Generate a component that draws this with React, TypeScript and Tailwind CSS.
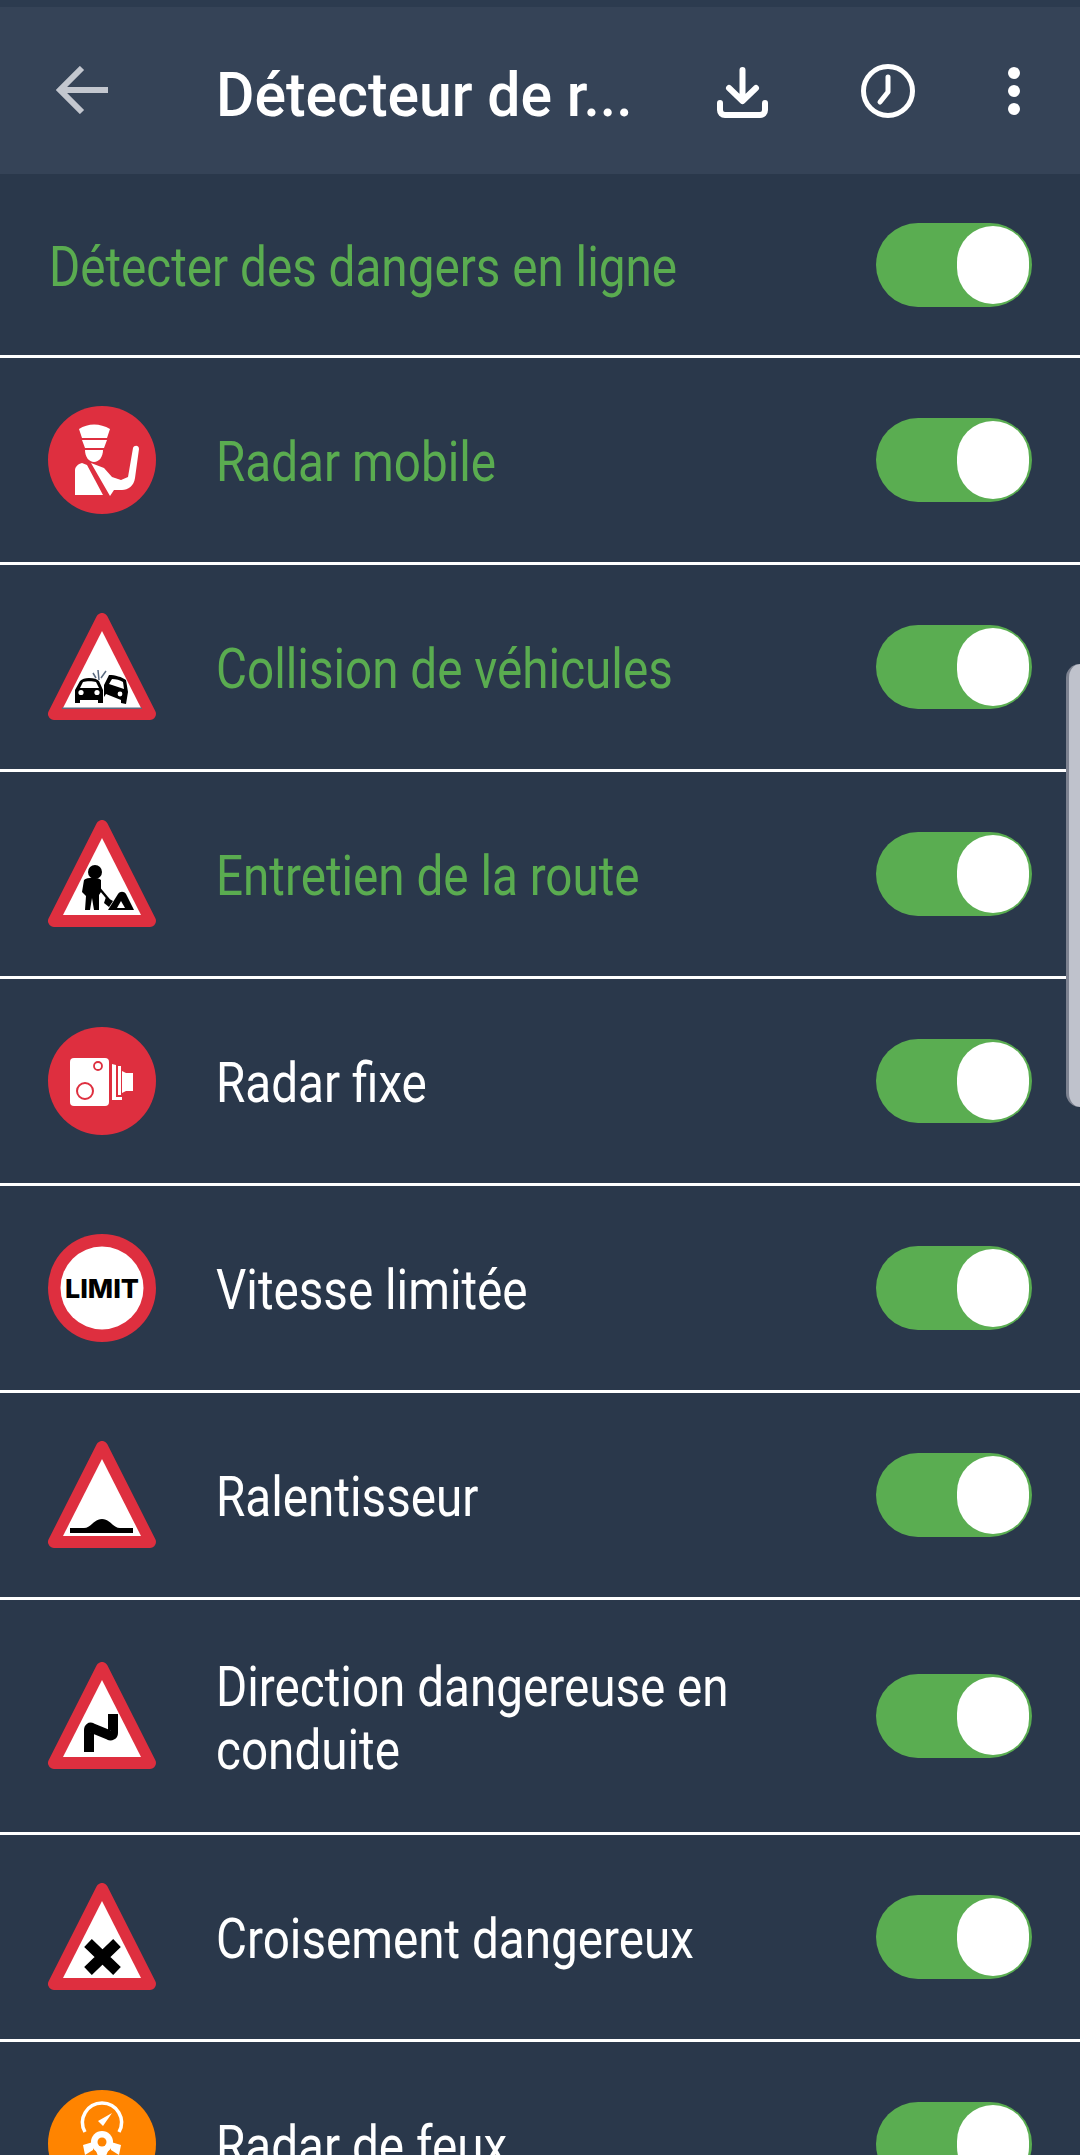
const labelFont = "font-['Roboto',sans-serif]";

function Triangle({ children }: { children?: React.ReactNode }) {
  return (
    <svg viewBox="0 0 108 108" className="w-[108px] h-[108px] shrink-0">
      <polygon points="54,6 6,101 102,101" fill="#de2f3f" stroke="#de2f3f" strokeWidth="12" strokeLinejoin="round" />
      <polygon points="54,18 15,95 93,95" fill="#ffffff" />
      {children}
    </svg>
  );
}

function Badge({ children, color = "#de2f3f" }: { children?: React.ReactNode; color?: string }) {
  return (
    <svg viewBox="0 0 108 108" className="w-[108px] h-[108px] shrink-0">
      <circle cx="54" cy="54" r="54" fill={color} />
      {children}
    </svg>
  );
}

const PoliceIcon = () => (
  <Badge>
    <path d="M31 23 C40 17 52 17 62 23 L59 32 H34 Z" fill="#fff" />
    <path d="M34 34 H59 L56 42 H37 Z" fill="#fff" />
    <path d="M37 44 H55 C55 51 51 56 46 56 C41 56 37 51 37 44 Z" fill="#fff" />
    <path d="M27 89 V64 C27 61 30 58 34 57 L39 59 L55 89 Z" fill="#fff" />
    <path d="M43 57 L56 62 L64 71 L73 74 L80 71 L85 42 C86 39 91 39 91 43 L87 72 C86 80 80 84 74 84 L66 84 L62 90 Z" fill="#fff" />
  </Badge>
);

const CollisionIcon = () => (
  <Triangle>
    <path d="M27 90 V77 L32 68 C34 66 37 65 41 65 C46 65 49 66 51 68 L55 77 V90 H50 V87 H32 V90 Z" fill="#000" />
    <path d="M32 75 L35 69 C38 68 45 68 48 69 L51 75 Z" fill="#fff" />
    <circle cx="33" cy="79.5" r="2.6" fill="#fff" />
    <circle cx="49" cy="79.5" r="2.6" fill="#fff" />
    <path d="M56 72 L61 62 C67 62 74 64 78 67 L80 79 L78 91 L73 90 L73 87 L58 81 L56 84 Z" fill="#000" />
    <path d="M61 71 L64 66 C68 66 72 67 75 69 L76 76 Z" fill="#fff" />
    <circle cx="72" cy="81" r="2.4" fill="#fff" />
    <path d="M51 67 L50 57 M53 65 L58 58 M48 65 L45 60" stroke="#5b6b80" strokeWidth="1.5" />
    <rect x="14" y="94.5" width="80" height="1.5" fill="#5b6b80" />
  </Triangle>
);

const WorkerIcon = () => (
  <Triangle>
    <circle cx="47" cy="52" r="7" fill="#000" />
    <path d="M36 60 C39 57 50 57 53 60 L53 72 L51 75 V90 H46 L44 78 L42 90 H37 L38 76 L34 72 Z" fill="#000" />
    <path d="M51 68 L61 80" stroke="#000" strokeWidth="2.4" />
    <path d="M58 77 L65 81 L61 87 L56 83 Z" fill="#000" />
    <path d="M60 90 L70 74 C72 71 76 71 78 74 L86 90 Z" fill="#000" />
    <path d="M69 88 L73 81 L77 88 Z" fill="#fff" />
  </Triangle>
);

const FixedRadarIcon = () => (
  <Badge>
    <rect x="22" y="31" width="39" height="48" rx="4" fill="#fff" />
    <circle cx="50" cy="39" r="4" fill="none" stroke="#de2f3f" strokeWidth="1.8" />
    <circle cx="37" cy="64" r="8" fill="none" stroke="#de2f3f" strokeWidth="2" />
    <path d="M64 37 L68 38 V71 H64 Z M70 39 H73 V68 H70 Z" fill="#fff" />
    <path d="M64 73 H74 V70 H64 Z" fill="#fff" />
    <path d="M74 44 L78 46 H85 V64 H78 L74 66 Z" fill="#fff" />
  </Badge>
);

const LimitIcon = () => (
  <svg viewBox="0 0 108 108" className="w-[108px] h-[108px] shrink-0">
    <circle cx="54" cy="54" r="54" fill="#de2f3f" />
    <circle cx="54" cy="54" r="41.5" fill="#fff" />
    <text x="54" y="63.5" textAnchor="middle" textLength="74" lengthAdjust="spacingAndGlyphs" fontFamily="Inter, sans-serif" fontWeight="800" fontSize="26" fill="#000">
      LIMIT
    </text>
  </svg>
);

const BumpIcon = () => (
  <Triangle>
    <path d="M22 87 H36 C43 87 46 78 54 78 C62 78 65 87 72 87 H85 V92 H22 Z" fill="#000" />
  </Triangle>
);

const CurveIcon = () => (
  <Triangle>
    <path d="M41 90 V68 C41 66 42 65 44 66 L61 73 C63 74 65 73 65 71 V52" fill="none" stroke="#000" strokeWidth="10" />
  </Triangle>
);

const CrossIcon = () => (
  <Triangle>
    <path d="M40 60 L69 88 M69 60 L40 88" fill="none" stroke="#000" strokeWidth="11" />
  </Triangle>
);

const LightsIcon = () => (
  <Badge color="#ff8400">
    <path d="M37 42 A19.5 19.5 0 1 1 71 42" fill="none" stroke="#fff" strokeWidth="3.5" />
    <path d="M50 31 L64 23 L55 36 Z" fill="#fff" />
    <circle cx="54" cy="52" r="11" fill="#fff" />
    <path d="M35 55 L45 52 V60 L37 65 Z M73 55 L63 52 V60 L71 65 Z M46 56 H62 L58 66 H50 Z" fill="#fff" />
    <circle cx="54" cy="52" r="4.5" fill="#ff8400" />
  </Badge>
);

function Toggle() {
  return (
    <div className="w-[156px] h-[84px] rounded-full bg-[#5aad51] flex items-center justify-end pr-[3px] shrink-0">
      <div className="w-[72px] h-[78px] rounded-full bg-white" />
    </div>
  );
}

type Row = { label: string; active?: boolean; icon: React.ReactNode; tall?: boolean };

const rows: Row[] = [
  { label: "Radar mobile", active: true, icon: <PoliceIcon /> },
  { label: "Collision de véhicules", active: true, icon: <CollisionIcon /> },
  { label: "Entretien de la route", active: true, icon: <WorkerIcon /> },
  { label: "Radar fixe", icon: <FixedRadarIcon /> },
  { label: "Vitesse limitée", icon: <LimitIcon /> },
  { label: "Ralentisseur", icon: <BumpIcon /> },
  { label: "Direction dangereuse en conduite", icon: <CurveIcon />, tall: true },
  { label: "Croisement dangereux", icon: <CrossIcon /> },
  { label: "Radar de feux", icon: <LightsIcon /> },
];

export default function App() {
  return (
    <main className={`relative w-[1080px] h-[2155px] overflow-hidden bg-[#2a384b] ${labelFont}`}>
      {/* Status strip + toolbar */}
      <div className="h-[7px] bg-[#2c3b4f]" />
      <header className="h-[167px] bg-[#354357] flex items-center relative">
        <svg viewBox="0 0 52 48" className="absolute left-[56px] top-[59px] w-[52px] h-[48px]" fill="none" stroke="#c3c7cf" strokeWidth="6">
          <path d="M26 2 L4 24 L26 46 M4 24 H52" />
        </svg>
        <h1 className="absolute left-[216px] top-[54px] w-[440px] text-[62px] leading-[68px] font-medium text-white whitespace-nowrap origin-left scale-x-[0.95]">
          Détecteur de r...
        </h1>
        <svg viewBox="0 0 51 51" className="absolute left-[717px] top-[60px] w-[51px] h-[51px]" fill="none" stroke="#fff" strokeWidth="6" strokeLinecap="round" strokeLinejoin="round">
          <path d="M25.5 3 V33 M12 21 L25.5 34 L39 21" />
          <path d="M3 36 V43 C3 46 5 48 8 48 H43 C46 48 48 46 48 43 V36" />
        </svg>
        <svg viewBox="0 0 54 54" className="absolute left-[861px] top-[57px] w-[54px] h-[54px]" fill="none" stroke="#fff" strokeWidth="5">
          <circle cx="27" cy="27" r="24.5" />
          <path d="M27 13 V28 L19 38" strokeLinecap="round" strokeLinejoin="round" />
        </svg>
        <div className="absolute left-[1008px] top-[60px] w-[12px] h-[48px] flex flex-col justify-between">
          <div className="w-[12px] h-[12px] rounded-full bg-white" />
          <div className="w-[12px] h-[12px] rounded-full bg-white" />
          <div className="w-[12px] h-[12px] rounded-full bg-white" />
        </div>
      </header>

      <div className="h-[181px] flex items-center justify-between pl-[49px] pr-[48px]">
        <span className="pt-[5px] text-[55px] leading-[62px] text-[#5aac50] whitespace-nowrap origin-left scale-x-[0.866]">
          Détecter des dangers en ligne
        </span>
        <Toggle />
      </div>

      {rows.map((row) => (
        <div key={row.label}>
          <div className="h-[3px] bg-white" />
          <div className={`${row.tall ? "h-[232px]" : "h-[204px]"} flex items-center pl-[48px] pr-[48px]`}>
            {row.icon}
            <div className="ml-[60px] flex-1 min-w-0">
              <div className={`pt-[5px] w-[635px] text-[55px] leading-[63px] origin-left scale-x-[0.866] ${row.active ? "text-[#5aac50]" : "text-white"}`}>
                {row.label}
              </div>
            </div>
            <Toggle />
          </div>
        </div>
      ))}

      {/* Scrollbar thumb */}
      <div className="absolute left-[1066px] top-[664px] w-[14px] h-[443px] rounded-l-[14px] bg-[#bfc2cc] border-l-[3px] border-[#7d8290]" />
    </main>
  );
}
